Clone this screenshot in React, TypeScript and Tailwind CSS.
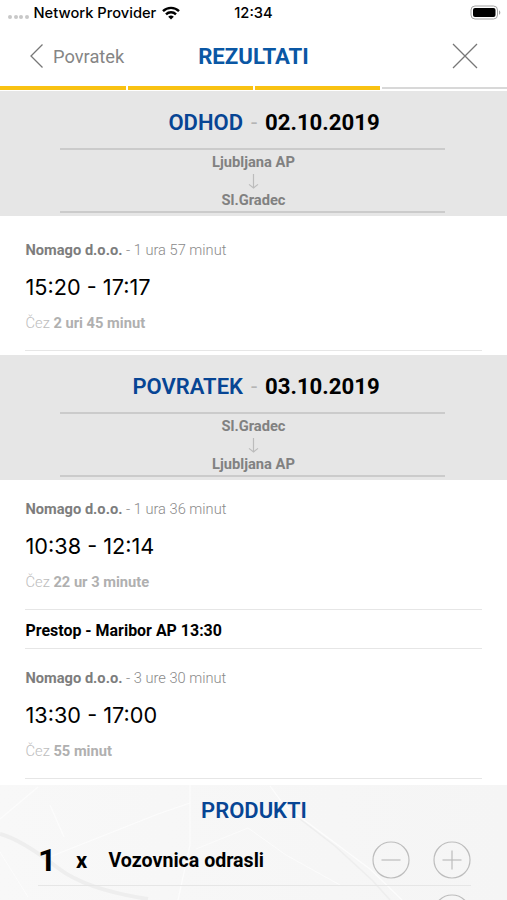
interface Trip {
  operator: string;
  duration: string;
  times: string;
  startsIn: string;
}

const outbound: Trip = {
  operator: 'Nomago d.o.o.',
  duration: '1 ura 57 minut',
  times: '15:20 - 17:17',
  startsIn: '2 uri 45 minut',
};

const inbound: Trip[] = [
  {
    operator: 'Nomago d.o.o.',
    duration: '1 ura 36 minut',
    times: '10:38 - 12:14',
    startsIn: '22 ur 3 minute',
  },
  {
    operator: 'Nomago d.o.o.',
    duration: '3 ure 30 minut',
    times: '13:30 - 17:00',
    startsIn: '55 minut',
  },
];

function StatusBar() {
  return (
    <div className="flex h-[26px] items-center font-['Inter',sans-serif] text-[14.7px] font-medium text-black">
      <div className="flex w-[220px] items-center pl-2">
        <div className="mt-2 mr-[5px] flex gap-[1.5px]">
          <span className="size-1 rounded-full bg-[#c8c8c8]" />
          <span className="size-1 rounded-full bg-[#c8c8c8]" />
          <span className="size-1 rounded-full bg-[#c8c8c8]" />
          <span className="size-1 rounded-full bg-[#c8c8c8]" />
        </div>
        <span className="whitespace-nowrap">Network Provider</span>
        <svg className="ml-[6px] h-[14px] w-[18px]" viewBox="0 0 18 14" fill="none" stroke="black" strokeWidth="2.4">
          <path d="M1 5.2a11.3 11.3 0 0 1 16 0" />
          <path d="M4 8.3a7.1 7.1 0 0 1 10 0" />
          <path d="M9 13.6L6.2 10.8a4 4 0 0 1 5.6 0z" fill="black" stroke="none" />
        </svg>
      </div>
      <span className="w-[67px] text-center">12:34</span>
      <svg className="mr-[6px] mb-px ml-auto h-[15px] w-[31px]" viewBox="0 0 31 15">
        <rect x="1" y="1" width="26.5" height="13" rx="4" fill="none" stroke="#a3a3a3" />
        <rect x="3" y="3" width="22.5" height="9" rx="2" fill="black" />
        <path d="M29 5.2v4.6c1.8-.8 1.8-3.8 0-4.6z" fill="#a3a3a3" />
      </svg>
    </div>
  );
}

function NavBar() {
  return (
    <div className="grid h-[60px] grid-cols-3 items-center">
      <button type="button" className="flex items-center pl-[30px] text-[18.3px] text-[#858585]">
        <svg className="mr-[10px] h-6 w-[13px]" viewBox="0 0 13 24" fill="none" stroke="#777" strokeWidth="1.3">
          <path d="M12.5 0.5L1 12L12.5 23.5" />
        </svg>
        <span className="pt-px">Povratek</span>
      </button>
      <h1 className="pt-px text-center text-[22.2px] font-bold text-[#0a57a4]">REZULTATI</h1>
      <button type="button" className="mr-[29px] justify-self-end" aria-label="Zapri">
        <svg className="size-[26px]" viewBox="0 0 26 26" stroke="#777" strokeWidth="1.3">
          <path d="M1 1L25 25M25 1L1 25" />
        </svg>
      </button>
    </div>
  );
}

function Progress() {
  return (
    <div className="flex h-[5px] items-start gap-[2px]">
      <span className="h-1 w-[126px] bg-[#f9c212]" />
      <span className="h-1 w-[125px] bg-[#f9c212]" />
      <span className="h-1 w-[125px] bg-[#f9c212]" />
      <span className="mt-px h-[2px] flex-1 bg-[#d8d8d8]" />
    </div>
  );
}

function DirectionHeader({ title, date, from, to }: { title: string; date: string; from: string; to: string }) {
  return (
    <section className="h-[125px] bg-[#e6e6e6] pt-[9px] pr-[62px] pl-[60px] text-center">
      <h2 className="flex h-[48px] whitespace-nowrap text-[22.2px] leading-[45px] font-bold text-black">
        <span className="w-[183px] text-right text-[22px] font-semibold text-[#074594]">{title}</span>
        <span className="w-[22px] font-normal text-[#b5b5b5]">-</span>
        <span>{date}</span>
      </h2>
      <div className="flex h-[65px] flex-col items-center border-y-2 border-[#cbcbcb] pl-[2px] text-[14.7px] font-bold text-[#818181]">
        <span className="h-6 leading-[25px]">{from}</span>
        <svg className="h-[15px] w-[11px] shrink-0" viewBox="0 0 11 15" fill="none" stroke="#bcbcbc" strokeWidth="1.2">
          <path d="M5.5 0V14M1 10.4L5.5 14L10 10.4" />
        </svg>
        <span className="h-[22px] leading-[22px]">{to}</span>
      </div>
    </section>
  );
}

function TripRow({ trip }: { trip: Trip }) {
  return (
    <div className="mx-[25px] h-[118px] border-b-[1.5px] border-[#e6e6e6] pl-[0.5px]">
      <p className="pt-px text-[14.65px] leading-8 font-light text-[#8a8a8a]">
        <b className="font-bold text-[#7d7d7d]">{trip.operator}</b> - {trip.duration}
      </p>
      <p className="font-['Inter',sans-serif] text-[21.7px] leading-[43px] text-black">{trip.times}</p>
      <p className="text-[14.7px] leading-[28px] font-light text-[#bdbdbd]">
        Čez <b className="font-bold text-[#b0b0b0]">{trip.startsIn}</b>
      </p>
    </div>
  );
}

function RoundButton({ plus = false }: { plus?: boolean }) {
  return (
    <button type="button" className="shrink-0" aria-label={plus ? 'Dodaj' : 'Odstrani'}>
      <svg className="size-[38px]" viewBox="0 0 38 38" fill="none" stroke="#bdbdbd" strokeWidth="1.2">
        <circle cx="19" cy="19" r="18" />
        <path d="M9.5 19H28.5" />
        {plus && <path d="M19 9.5V28.5" />}
      </svg>
    </button>
  );
}

function MapBackdrop() {
  return (
    <svg className="absolute inset-0 h-[115px] w-[507px]" viewBox="0 0 507 115" fill="none">
      <g stroke="#eeeeee">
        <path d="M0 49C16 53 36 66 58 83S115 109 148 114" strokeWidth="4" />
        <path d="M300 34L335 61L373 96L390 115" strokeWidth="1.5" />
      </g>
      <g stroke="#fcfcfc" strokeWidth="1.2">
        <path d="M0 34L38 2M47 73L158 29L190 18M190 0V60L178 115M50 20L64 52M270 1L284 20L370 84L402 115" />
        <path d="M0 67L28 112M196 64L248 43L286 70L340 100" strokeWidth="0.8" />
      </g>
    </svg>
  );
}

export default function App() {
  return (
    <main className="h-[900px] w-[507px] overflow-hidden bg-white font-['Roboto',sans-serif]">
      <StatusBar />
      <NavBar />
      <Progress />

      <DirectionHeader title="ODHOD" date="02.10.2019" from="Ljubljana AP" to="Sl.Gradec" />
      <div className="h-[139px] pt-[17px]">
        <TripRow trip={outbound} />
      </div>

      <DirectionHeader title="POVRATEK" date="03.10.2019" from="Sl.Gradec" to="Ljubljana AP" />
      <div className="h-[305px] pt-[12px]">
        <TripRow trip={inbound[0]} />
        <div className="mx-[25px] h-[39px] border-b-[1.5px] border-[#e6e6e6] pl-[0.5px] text-[15.95px] leading-[41px] font-bold text-black">
          Prestop - Maribor AP 13:30
        </div>
        <div className="pt-[12px]">
          <TripRow trip={inbound[1]} />
        </div>
      </div>

      {/* Products */}
      <section className="relative h-[115px] overflow-hidden bg-linear-to-r from-[#f8f8f8] to-[#f5f5f5]">
        <MapBackdrop />
        <div className="relative">
          <h2 className="h-[50px] pl-px text-center text-[22px] leading-[51px] font-semibold text-[#074594]">PRODUKTI</h2>
          <div className="mr-[36px] ml-[38px] flex h-[51px] items-center border-b border-[#e6e6e6] font-bold text-black">
            <span className="w-[38px] text-[32px]">1</span>
            <span className="w-[32.5px] pt-px text-[22px]">x</span>
            <span className="flex-1 pt-px text-[19.6px] whitespace-nowrap">Vozovnica odrasli</span>
            <div className="flex gap-[23px]">
              <RoundButton />
              <RoundButton plus />
            </div>
          </div>
          <div className="mx-[36px] flex justify-end pt-[8px]">
            <RoundButton plus />
          </div>
        </div>
      </section>
    </main>
  );
}
